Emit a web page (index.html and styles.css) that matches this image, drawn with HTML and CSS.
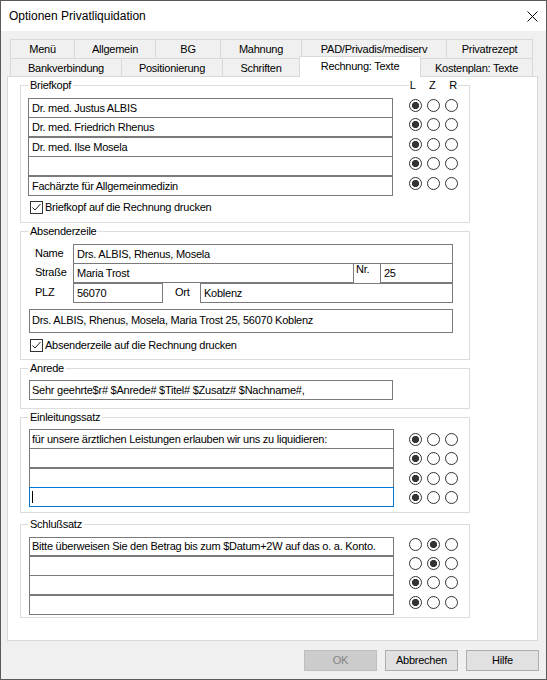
FILE: index.html
```html
<!DOCTYPE html>
<html lang="de">
<head>
<meta charset="utf-8">
<title>Optionen Privatliquidation</title>
<link rel="stylesheet" href="styles.css">
</head>
<body>
<div class="window">
  <div class="titlebar">
    <span class="title">Optionen Privatliquidation</span>
    <svg class="close" width="11" height="11" viewBox="0 0 11 11"><path d="M0.5 0.5 L10.5 10.5 M10.5 0.5 L0.5 10.5" stroke="#000" stroke-width="1" fill="none"/></svg>
  </div>
  <div class="content">
    <div class="tabs">
      <div class="tabrow">
        <div class="tab t-menu">Menü</div>
        <div class="tab t-allg">Allgemein</div>
        <div class="tab t-bg">BG</div>
        <div class="tab t-mahn">Mahnung</div>
        <div class="tab t-pad">PAD/Privadis/mediserv</div>
        <div class="tab t-rezept">Privatrezept</div>
      </div>
      <div class="tabrow row2">
        <div class="tab t-bank">Bankverbindung</div>
        <div class="tab t-pos">Positionierung</div>
        <div class="tab t-schr">Schriften</div>
        <div class="tab t-rech active">Rechnung: Texte</div>
        <div class="tab t-kost">Kostenplan: Texte</div>
      </div>
    </div>
    <div class="panel">
      <div class="group g-brief">
        <div class="group-head"><span class="legend">Briefkopf</span><span class="lzr">L Z R</span></div>
        <div class="rows">
          <div class="line"><div class="field">Dr. med. Justus ALBIS</div><div class="radios"><span class="radio on"></span><span class="radio"></span><span class="radio"></span></div></div>
          <div class="line"><div class="field">Dr. med. Friedrich Rhenus</div><div class="radios"><span class="radio on"></span><span class="radio"></span><span class="radio"></span></div></div>
          <div class="line gap0"><div class="field">Dr. med. Ilse Mosela</div><div class="radios"><span class="radio on"></span><span class="radio"></span><span class="radio"></span></div></div>
          <div class="line"><div class="field"></div><div class="radios"><span class="radio on"></span><span class="radio"></span><span class="radio"></span></div></div>
          <div class="line gap0"><div class="field">Fachärzte für Allgemeinmedizin</div><div class="radios"><span class="radio on"></span><span class="radio"></span><span class="radio"></span></div></div>
        </div>
        <div class="check"><span class="box"><svg width="11" height="11" viewBox="0 0 11 11"><path d="M1.5 5.5 L4 8 L9.5 2" stroke="#222" stroke-width="1" fill="none"/></svg></span><span>Briefkopf auf die Rechnung drucken</span></div>
      </div>

      <div class="group g-abs">
        <div class="group-head"><span class="legend">Absenderzeile</span></div>
        <div class="rows">
          <div class="arow"><span class="lbl">Name</span><div class="field f-name">Drs. ALBIS, Rhenus, Mosela</div></div>
          <div class="arow"><span class="lbl">Straße</span><div class="field f-str">Maria Trost</div><span class="nr">Nr.</span><div class="field f-nr">25</div></div>
          <div class="arow gap0"><span class="lbl">PLZ</span><div class="field f-plz">56070</div><span class="ort">Ort</span><div class="field f-ort">Koblenz</div></div>
        </div>
        <div class="field f-sum">Drs. ALBIS, Rhenus, Mosela, Maria Trost 25, 56070 Koblenz</div>
        <div class="check"><span class="box"><svg width="11" height="11" viewBox="0 0 11 11"><path d="M1.5 5.5 L4 8 L9.5 2" stroke="#222" stroke-width="1" fill="none"/></svg></span><span>Absenderzeile auf die Rechnung drucken</span></div>
      </div>

      <div class="group g-anrede">
        <div class="group-head"><span class="legend">Anrede</span></div>
        <div class="field f-anrede">Sehr geehrte$r# $Anrede# $Titel# $Zusatz# $Nachname#,</div>
      </div>

      <div class="group g-einl">
        <div class="group-head"><span class="legend">Einleitungssatz</span></div>
        <div class="rows wide centered">
          <div class="line"><div class="field">für unsere ärztlichen Leistungen erlauben wir uns zu liquidieren:</div><div class="radios"><span class="radio on"></span><span class="radio"></span><span class="radio"></span></div></div>
          <div class="line"><div class="field"></div><div class="radios"><span class="radio on"></span><span class="radio"></span><span class="radio"></span></div></div>
          <div class="line gap0"><div class="field"></div><div class="radios"><span class="radio on"></span><span class="radio"></span><span class="radio"></span></div></div>
          <div class="line"><div class="field focus"><span class="caret"></span></div><div class="radios"><span class="radio on"></span><span class="radio"></span><span class="radio"></span></div></div>
        </div>
      </div>

      <div class="group g-schluss">
        <div class="group-head"><span class="legend">Schlußsatz</span></div>
        <div class="rows wide">
          <div class="line first"><div class="field">Bitte überweisen Sie den Betrag bis zum $Datum+2W auf das o. a. Konto.</div><div class="radios"><span class="radio"></span><span class="radio on"></span><span class="radio"></span></div></div>
          <div class="line gap0"><div class="field"></div><div class="radios"><span class="radio"></span><span class="radio on"></span><span class="radio"></span></div></div>
          <div class="line"><div class="field"></div><div class="radios"><span class="radio on"></span><span class="radio"></span><span class="radio"></span></div></div>
          <div class="line gap0"><div class="field"></div><div class="radios"><span class="radio on"></span><span class="radio"></span><span class="radio"></span></div></div>
        </div>
      </div>
    </div>
    <div class="buttons">
      <div class="btn disabled">OK</div>
      <div class="btn">Abbrechen</div>
      <div class="btn">Hilfe</div>
    </div>
  </div>
</div>
</body>
</html>
```
FILE: styles.css
```css
* { box-sizing: border-box; }
html, body { margin: 0; padding: 0; }
body {
  width: 547px;
  height: 680px;
  overflow: hidden;
  background: #f0f0f0;
  font-family: "Liberation Sans", Arial, sans-serif;
  font-size: 11px;
  letter-spacing: -0.25px;
  color: #000;
}
.window {
  width: 547px;
  height: 680px;
  border: 1px solid #5a5a5a;
  background: #f0f0f0;
  display: flex;
  flex-direction: column;
}
.titlebar {
  flex: none;
  height: 30px;
  background: #fff;
  display: flex;
  align-items: center;
  justify-content: space-between;
  padding: 0 8px 0 8px;
}
.title { font-size: 12px; letter-spacing: 0; line-height: 30px; }
.close { display: block; margin-top: 1px; }

.content { padding: 8px 7px 0 6px; }

/* tabs */
.tabs { padding-left: 3px; }
.tabrow { display: flex; align-items: flex-start; }
.tab {
  height: 20px;
  border: 1px solid #d9d9d9;
  background: #f0f0f0;
  text-align: center;
  padding-top: 1px;
  line-height: 17px;
  white-space: nowrap;
}
.tab + .tab { margin-left: -1px; }
.row2 { margin-top: -1px; }
.row2 .tab { height: 19px; line-height: 16px; }
.row2 .tab.active {
  position: relative;
  z-index: 2;
  margin-top: -2px;
  height: 21px;
  border-bottom: none;
  background: #fff;
  padding-top: 0;
  line-height: 18px;
}
.t-menu { width: 65px; }
.t-allg { width: 82px; }
.t-bg { width: 66px; }
.t-mahn { width: 82px; }
.t-pad { width: 146px; }
.t-rezept { width: 87px; }
.t-bank { width: 112px; }
.t-pos { width: 102px; }
.t-schr { width: 78px; }
.t-rech { width: 122px; }
.t-kost { width: 113px; }

/* panel */
.panel {
  width: 531px;
  height: 565px;
  margin-top: -1px;
  background: #fff;
  border: 1px solid #d9d9d9;
  padding: 0 0 0 12px;
}

/* groups */
.group {
  width: 450px;
  border: 1px solid #dcdcdc;
  margin-top: 8px;
  padding: 0 7px 8px 7px;
}
.group-head {
  display: flex;
  height: 13px;
  line-height: 13px;
  margin-top: -7px;
}
.legend { background: #fff; padding: 0 2px; white-space: nowrap; }
.lzr {
  margin-left: auto;
  margin-right: 4px;
  padding: 0 1px;
  word-spacing: 11px;
  background: #fff;
}
.g-abs { padding-bottom: 7px; }
.g-einl { padding-bottom: 5px; }
.g-schluss { margin-top: 11px; padding-bottom: 2px; }

.field {
  height: 20px;
  border: 1px solid #7a7a7a;
  background: #fff;
  padding: 0 3px;
  line-height: 18px;
  white-space: nowrap;
  overflow: hidden;
}
.field.focus { border-color: #0078d7; }
.caret { display: block; width: 1px; height: 12px; background: #000; margin-top: 3px; }

.rows { margin-top: 6px; }
.line { display: flex; align-items: flex-start; }
.line + .line { margin-top: -1px; }
.line + .line.gap0 { margin-top: 0; }
.line .field { width: 365px; flex: none; }
.radios { display: flex; gap: 5px; margin-left: 16px; margin-top: 1px; }
.radio {
  width: 13px;
  height: 13px;
  border: 1px solid #333;
  border-radius: 50%;
  background: #fff;
  flex: none;
}
.radio.on { background: radial-gradient(circle, #333 0, #333 3.3px, #fff 3.9px); }

.rows.wide .field { margin-left: 1px; padding: 0 2px; }
.rows.wide .radios { margin-left: 15px; }
.rows.centered { margin-top: 5px; }
.rows.centered .line { align-items: center; }
.rows.centered .radios { margin-top: 0; }
.line.first .field { height: 19px; line-height: 16px; }

.check {
  display: flex;
  align-items: flex-start;
  margin-top: 5px;
  margin-left: 2px;
  line-height: 13px;
  white-space: nowrap;
}
.box {
  width: 13px;
  height: 13px;
  border: 1px solid #333;
  background: #fff;
  margin-right: 2px;
  flex: none;
}
.box svg { display: block; }

/* absender */
.arow { display: flex; align-items: flex-start; }
.arow + .arow { margin-top: -1px; }
.arow + .arow.gap0 { margin-top: 0; }
.lbl { width: 45px; flex: none; padding-left: 7px; line-height: 18px; }
.f-name { width: 380px; }
.f-str { width: 281px; }
.nr { width: 26px; flex: none; padding-left: 2px; line-height: 13px; }
.f-nr { width: 73px; }
.f-plz { width: 90px; }
.ort { width: 37px; flex: none; padding-left: 12px; line-height: 18px; }
.f-ort { width: 253px; }
.f-sum {
  margin-top: 6px;
  margin-left: 1px;
  width: 424px;
  height: 24px;
  padding: 0 2px 2px 2px;
  line-height: 20px;
}
.g-abs .check { margin-top: 6px; }

.f-anrede {
  margin-top: 5px;
  margin-left: 1px;
  width: 364px;
  padding: 0 2px;
}

/* buttons */
.buttons {
  display: flex;
  justify-content: flex-end;
  gap: 8px;
  margin-top: 9px;
}
.btn {
  width: 73px;
  height: 21px;
  border: 1px solid #adadad;
  background: #e1e1e1;
  text-align: center;
  line-height: 19px;
}
.btn.disabled { background: #cccccc; border-color: #bfbfbf; color: #838383; }
```
